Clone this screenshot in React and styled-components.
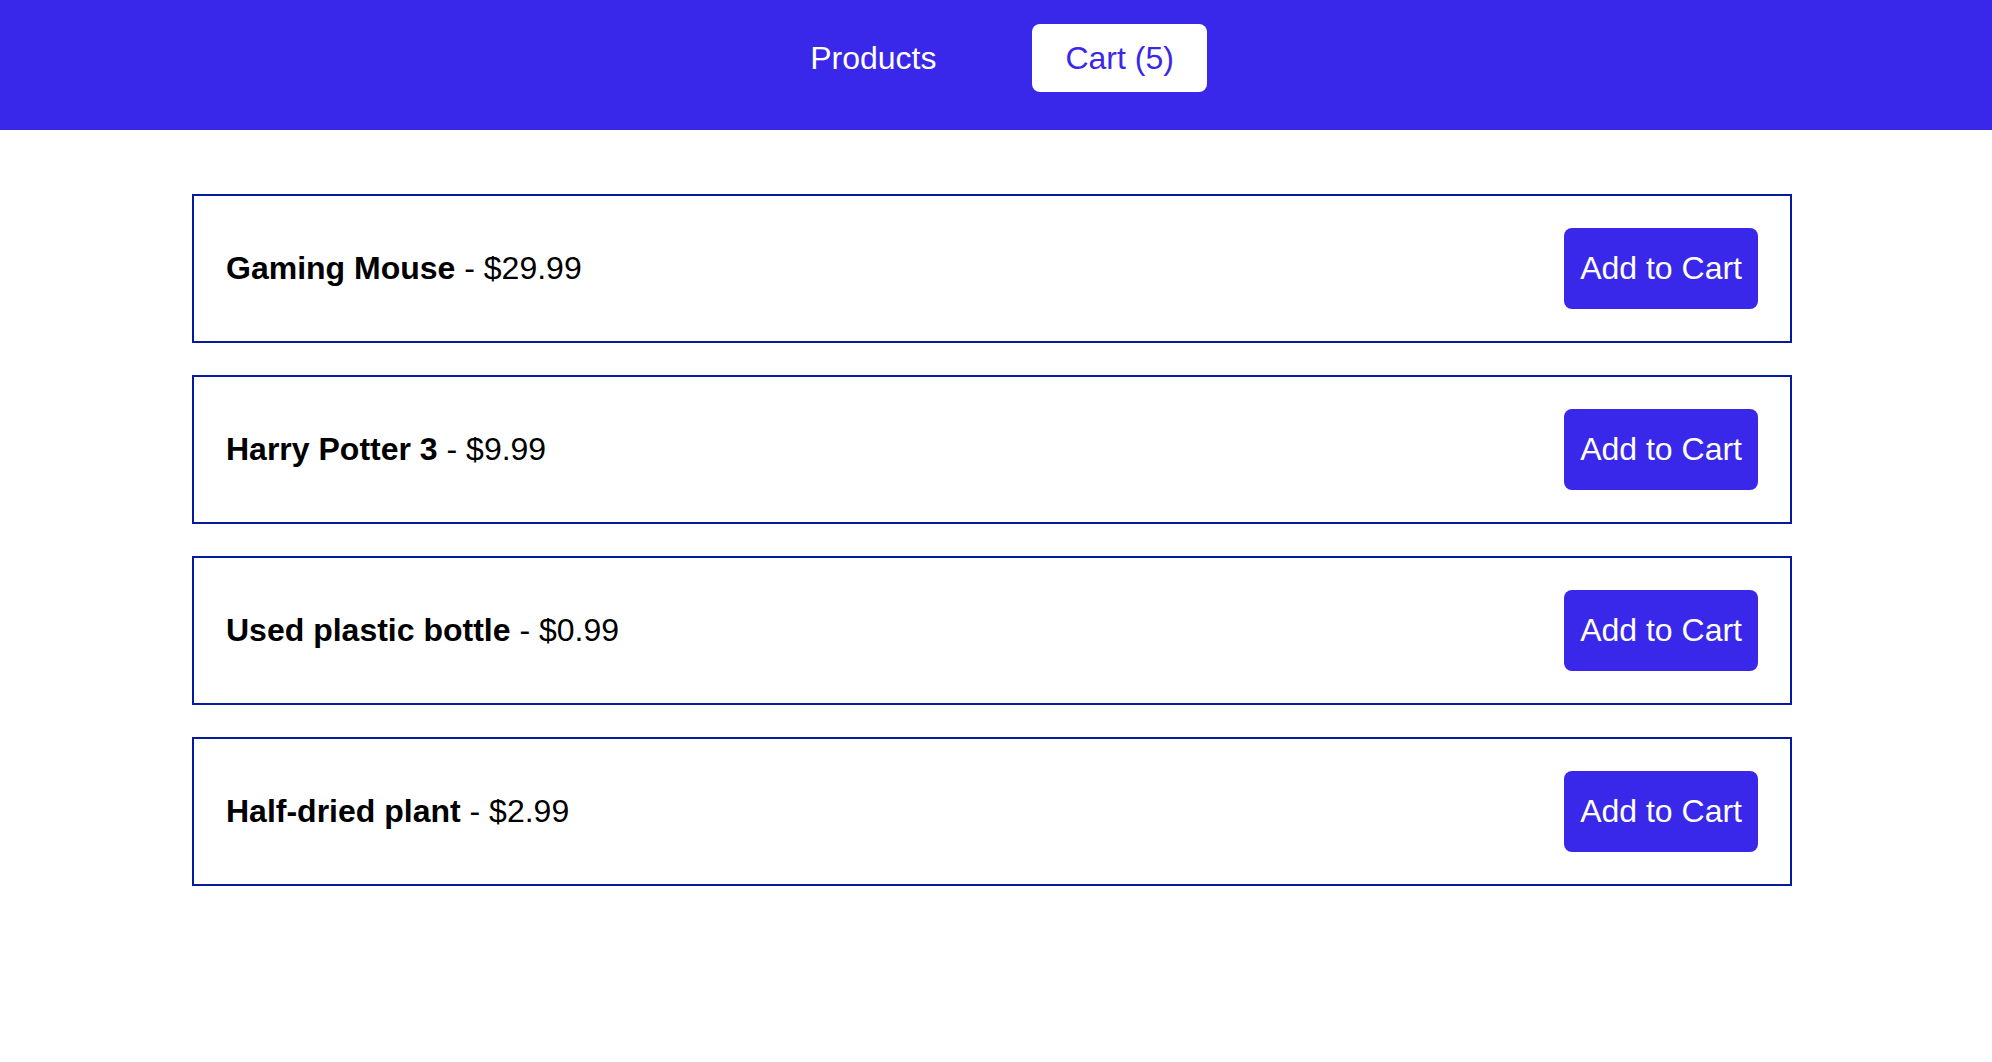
import React from "react";
import styled, { createGlobalStyle } from "styled-components";

const GlobalStyle = createGlobalStyle`
  html, body {
    margin: 0;
    padding: 0;
    background: #ffffff;
    font-family: "Liberation Sans", Arial, Helvetica, sans-serif;
  }
  * { box-sizing: border-box; }
`;

const Header = styled.header`
  background: #3a28ea;
  height: 130px;
  padding: 24px 8px 0 0;
`;

const Nav = styled.nav`
  display: flex;
  justify-content: center;
  gap: 63px;
`;

const NavLink = styled.button`
  font-family: inherit;
  font-size: 32px;
  line-height: 36px;
  padding: 16px 33px;
  border: none;
  border-radius: 8px;
  cursor: pointer;
  background: ${(p) => (p.$active ? "#ffffff" : "transparent")};
  color: ${(p) => (p.$active ? "#3a28ea" : "#ffffff")};
`;

const Main = styled.main`
  padding: 64px 8px 0 0;
`;

const List = styled.ul`
  list-style: none;
  margin: 0 auto;
  padding: 0;
  max-width: 1600px;
  display: flex;
  flex-direction: column;
  gap: 32px;
`;

const Card = styled.li`
  display: flex;
  align-items: center;
  justify-content: space-between;
  border: 2px solid #061a9e;
  padding: 32px;
`;

const Info = styled.span`
  font-size: 32px;
  color: #000;
`;

const Name = styled.strong`
  font-weight: 700;
`;

const AddButton = styled.button`
  font-family: inherit;
  font-size: 32px;
  line-height: 49px;
  padding: 16px 16px;
  border: none;
  border-radius: 8px;
  background: #3a28ea;
  color: #ffffff;
  cursor: pointer;
`;

const products = [
  { name: "Gaming Mouse", price: "$29.99" },
  { name: "Harry Potter 3", price: "$9.99" },
  { name: "Used plastic bottle", price: "$0.99" },
  { name: "Half-dried plant", price: "$2.99" },
];

export default function App() {
  return (
    <>
      <GlobalStyle />
      <Header>
        <Nav>
          <NavLink>Products</NavLink>
          <NavLink $active>Cart (5)</NavLink>
        </Nav>
      </Header>
      <Main>
        <List>
          {products.map((p) => (
            <Card key={p.name}>
              <Info>
                <Name>{p.name}</Name> - {p.price}
              </Info>
              <AddButton>Add to Cart</AddButton>
            </Card>
          ))}
        </List>
      </Main>
    </>
  );
}
